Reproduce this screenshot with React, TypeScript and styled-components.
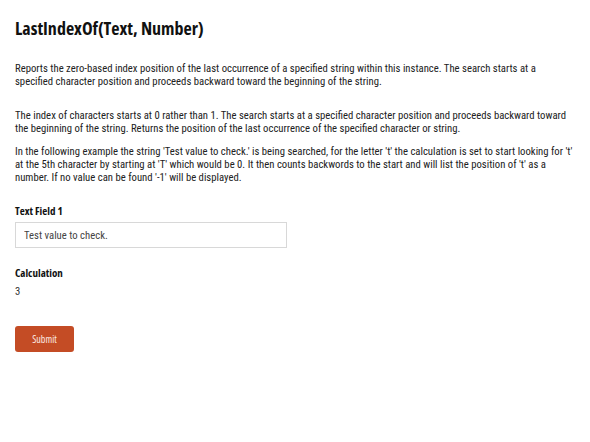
import styled, { createGlobalStyle } from "styled-components";

const GlobalStyle = createGlobalStyle`
  body {
    margin: 0;
    background: #fff;
    font-family: Roboto, "Liberation Sans", Arial, sans-serif;
  }
`;

const Page = styled.div`
  padding: 14px 17px 14px 15px;
  color: #222;
`;

const Title = styled.h1`
  margin: 0 0 20px;
  font-family: "Open Sans", sans-serif;
  font-stretch: 75%;
  font-weight: 700;
  font-size: 18px;
  line-height: 28px;
  color: #111;
`;

const Para = styled.p<{ $gap?: number }>`
  margin: 0 0 ${(p) => p.$gap ?? 10}px;
  font-size: 10.7px;
  font-stretch: 80%;
  line-height: 13px;
  color: #222;
`;

const Field = styled.div<{ $top: number }>`
  display: flex;
  flex-direction: column;
  margin-top: ${(p) => p.$top}px;
`;

const Label = styled.label`
  font-family: "Open Sans", sans-serif;
  font-stretch: 75%;
  font-weight: 700;
  font-size: 11px;
  line-height: 16px;
  color: #111;
  margin-bottom: 3px;
`;

const Input = styled.input`
  box-sizing: border-box;
  width: 272px;
  height: 26px;
  padding: 0 8px;
  border: 1px solid #d8d8d8;
  font-family: Roboto, "Liberation Sans", Arial, sans-serif;
  font-size: 10.7px;
  font-stretch: 80%;
  color: #444;
  outline: none;
`;

const Value = styled.div`
  font-size: 10.7px;
  font-stretch: 80%;
  line-height: 16px;
  color: #333;
`;

const SubmitButton = styled.button`
  margin-top: 26px;
  width: 59px;
  height: 26px;
  border: none;
  border-radius: 3px;
  background: #c44c25;
  color: #fbe9e3;
  font-family: "Open Sans", sans-serif;
  font-stretch: 75%;
  font-size: 10px;
  cursor: pointer;
`;

export default function App() {
  return (
    <Page>
      <GlobalStyle />
      <Title>LastIndexOf(Text, Number)</Title>
      <Para $gap={21}>
        Reports the zero-based index position of the last occurrence of a specified string within
        this instance. The search starts at a specified character position and proceeds backward
        toward the beginning of the string.
      </Para>
      <Para>
        The index of characters starts at 0 rather than 1. The search starts at a specified character
        position and proceeds backward toward the beginning of the string. Returns the position of
        the last occurrence of the specified character or string.
      </Para>
      <Para $gap={0}>
        In the following example the string 'Test value to check.' is being searched, for the letter
        't' the calculation is set to start looking for 't' at the 5th character by starting at 'T'
        which would be 0. It then counts backwords to the start and will list the position of 't' as
        a number. If no value can be found '-1' will be displayed.
      </Para>
      <Field $top={19}>
        <Label>Text Field 1</Label>
        <Input defaultValue="Test value to check." />
      </Field>
      <Field $top={17}>
        <Label>Calculation</Label>
        <Value>3</Value>
      </Field>
      <SubmitButton>Submit</SubmitButton>
    </Page>
  );
}
